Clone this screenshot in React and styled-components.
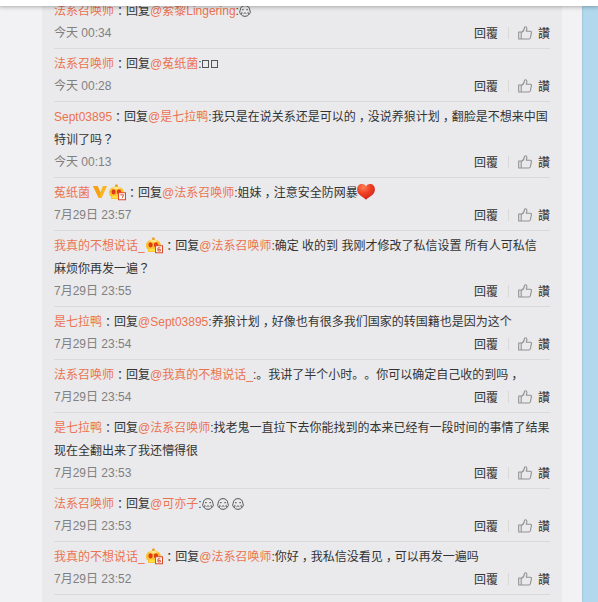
import React from 'react';
import styled, { createGlobalStyle } from 'styled-components';

const GlobalStyle = createGlobalStyle`
  * { box-sizing: border-box; }
  body {
    margin: 0;
    overflow: hidden;
    background: #b1d8ed;
    color: #333;
    font: 12px/23px "Liberation Sans", "Noto Sans CJK SC", sans-serif;
    font-feature-settings: "chws" 0;
    text-spacing-trim: space-all;
  }
`;

const Page = styled.div`
  display: flex;
  flex-direction: column;
  width: 598px;
  height: 602px;
  overflow: hidden;
`;

const TopBar = styled.header`
  position: relative;
  z-index: 1;
  flex: none;
  height: 6px;
  background: #fff;
  box-shadow: 0 0 4px 1px rgba(0, 0, 0, 0.3);
`;

const Column = styled.main`
  display: flex;
  flex: 1;
  min-height: 0;
  width: 582px;
  padding: 0 20px 0 42px;
  background: #f2f2f5;
  box-shadow: 0 0 2px rgba(0, 0, 0, 0.2);
`;

const Comments = styled.section`
  flex: 1;
  margin-top: -10px;
  padding: 0 12px;
  background: #eaeaec;
`;

const Comment = styled.article`
  padding: 4px 0 5px;
  border-bottom: 1px solid #d9d9db;
`;

const Message = styled.div`
  min-height: 23px;
  line-height: 23px;
  white-space: pre;
`;

const MessageLine = styled.div`
  height: 23px;
`;

const Name = styled.a`
  color: #eb7350;
  text-decoration: none;
`;

const Mark = styled.span`
  font-family: "Noto Sans CJK TC", sans-serif;
  line-height: 1;
  vertical-align: ${(p) => p.$shift || 0}px;
`;

const MissingGlyph = styled.span`
  display: inline-block;
  width: 7px;
  height: 8px;
  margin-right: 2px;
  border: 1px solid #555;
`;

const Meta = styled.footer`
  display: flex;
  align-items: center;
  justify-content: space-between;
  height: 20px;
  line-height: 20px;
`;

const Time = styled.time`
  color: #808080;
`;

const Actions = styled.div`
  display: flex;
  align-items: center;
  font-family: "Noto Sans CJK TC", sans-serif;
`;

const Divider = styled.i`
  width: 1px;
  height: 12px;
  margin: 0 9px 0 10px;
  background: #d9d9d9;
`;

const Thumb = styled.svg`
  width: 14px;
  height: 14px;
  margin: -1px 6px 0 0;
`;

const Glyph = styled.svg`
  width: ${(p) => p.$size}px;
  height: ${(p) => p.$size}px;
  margin: ${(p) => p.$margin || '0'};
  vertical-align: ${(p) => p.$drop || -3}px;
`;

const Face = () => (
  <Glyph $size={12} $drop={-2} viewBox="0 0 12 12" fill="none" stroke="#444" strokeWidth=".9">
    <path d="M6 .6A5 5 0 0 0 1.200 5.200C.400 6.500.400 8.600 1.900 9.200A5 5 0 0 0 6 11.400a5 5 0 0 0 4.100-2.200C11.600 8.600 11.600 6.500 10.800 5.200A5 5 0 0 0 6 .6z" />
    <path d="M3 4.700h1.700M7.300 4.700H9M4.600 8.600c.6-.8 2.200-.8 2.800 0M1.900 9.200C3.300 9 3.300 7.300 2.300 6.800M10.100 9.200C8.700 9 8.700 7.300 9.700 6.800" />
  </Glyph>
);

const Vip = () => (
  <Glyph $size={14} $margin="0 2px 0 3px" $drop={-2} viewBox="0 0 14 14">
    <path d="M0 1h4.600L7.300 7.200 10 1h4L8.600 13H5.800z" fill="#fdb51b" />
    <path d="M4.600 1 7.300 7.200 6.400 13H5.800L0 1z" fill="#f5a11a" />
  </Glyph>
);

const Badge = ({ digit, first }) => (
  <Glyph $size={17} $drop={-4} $margin={first ? '0 0 0 1.5px' : '0'} viewBox="0 0 16 16">
    <circle cx="7" cy="1.800" r="1.500" fill="#e8a33b" />
    <path d="M0 8C0 4.300 3 2.500 7 2.500S14 4.300 14 8c0 2-1 3.300-2 4v2H2v-2C1 11.300 0 10 0 8z" fill="#fbc02f" />
    <path d="M3 3.800C5 2.600 9 2.600 11 3.800L9 5H5z" fill="#fde98a" />
    <ellipse cx="4.300" cy="7.400" rx="2" ry="2.500" fill="#e23a18" />
    <ellipse cx="9.400" cy="7.400" rx="2" ry="2.500" fill="#e23a18" />
    <path d="M3 11h6.500v2.500H3z" fill="#ffdf3a" />
    <path d="M9 8.300h6.500v6.500H9z" fill="#fff" stroke="#d94a2c" />
    <path d={digit === 7 ? 'M10.600 10.200h3.200l-1.500 3.300' : 'M13.600 10.200h-2.400v3h2.300v-1.500h-2'} fill="none" stroke="#d94a2c" strokeWidth=".9" />
  </Glyph>
);

const Heart = () => (
  <Glyph $size={18} $drop={-4} $margin="0 0 0 -1px" viewBox="0 0 18 18">
    <defs>
      <radialGradient id="heart" cx=".35" cy=".2" r=".8">
        <stop offset="0" stopColor="#ff8054" />
        <stop offset=".5" stopColor="#ee4025" />
        <stop offset="1" stopColor="#d32318" />
      </radialGradient>
    </defs>
    <path d="M9 3.500C7.500.700 3.500.300 1.500 2.600-.600 5-.200 8.700 2 11.200 4 13.500 7 14.500 9 16.800c2-2.300 5-3.300 7-5.600 2.200-2.500 2.600-6.200.500-8.600C14.500.300 10.500.700 9 3.500z" fill="url(#heart)" />
  </Glyph>
);

const Like = () => (
  <Thumb viewBox="0 0 14 14" fill="none" stroke="#929292" strokeWidth="1.100" strokeLinejoin="round">
    <path d="M.700 6h2.500v7H.700zM3.200 6.500c2-.900 3-2.300 3.100-4.400C6.400.300 8.600.200 8.800 2c.1 1-.1 2.100-.5 3.200h4c1 0 1.300.800 1.100 1.600l-1 4.900c-.2.800-.7 1.300-1.500 1.300H3.200z" />
  </Thumb>
);

const Body = ({ text }) =>
  text.split(/([，？])/).map((part, i) =>
    part === '，' || part === '？' ? (
      <Mark key={i} $shift={part === '，' ? -4 : 0}>{part}</Mark>
    ) : (
      part
    )
  );

const COMMENTS = [
  { from: '法系召唤师', to: '萦黎Lingering', lines: [<Face key="f" />], time: '今天 00:34' },
  {
    from: '法系召唤师',
    to: '菟纸菌',
    lines: [<React.Fragment key="m"><MissingGlyph /><MissingGlyph /></React.Fragment>],
    time: '今天 00:28',
  },
  {
    from: 'Sept03895',
    to: '是七拉鸭',
    lines: ['我只是在说关系还是可以的，没说养狼计划，翻脸是不想来中国', '特训了吗？'],
    time: '今天 00:13',
  },
  {
    from: '菟纸菌',
    icons: <><Vip /><Badge digit={7} /></>,
    to: '法系召唤师',
    lines: ['姐妹，注意安全防网暴'],
    tail: <Heart />,
    time: '7月29日 23:57',
  },
  {
    from: '我真的不想说话_',
    icons: <Badge digit={6} first />,
    to: '法系召唤师',
    lines: ['确定 收的到 我刚才修改了私信设置 所有人可私信', '麻烦你再发一遍？'],
    time: '7月29日 23:55',
  },
  {
    from: '是七拉鸭',
    to: 'Sept03895',
    lines: ['养狼计划，好像也有很多我们国家的转国籍也是因为这个'],
    time: '7月29日 23:54',
  },
  {
    from: '法系召唤师',
    to: '我真的不想说话_',
    lines: ['。我讲了半个小时。。你可以确定自己收的到吗，'],
    time: '7月29日 23:54',
  },
  {
    from: '是七拉鸭',
    to: '法系召唤师',
    lines: ['找老鬼一直拉下去你能找到的本来已经有一段时间的事情了结果', '现在全翻出来了我还懵得很'],
    time: '7月29日 23:53',
  },
  {
    from: '法系召唤师',
    to: '可亦子',
    lines: [<React.Fragment key="f"><Face /> <Face /> <Face /></React.Fragment>],
    time: '7月29日 23:53',
  },
  {
    from: '我真的不想说话_',
    icons: <Badge digit={6} first />,
    to: '法系召唤师',
    lines: ['你好，我私信没看见，可以再发一遍吗'],
    time: '7月29日 23:52',
  },
];

const renderLine = (line) => (typeof line === 'string' ? <Body text={line} /> : line);

const CommentItem = ({ from, icons, to, lines, tail, time }) => (
  <Comment>
    <Message>
      <MessageLine>
        <Name>{from}</Name>
        {icons}
        <Mark $shift={-1}>：</Mark>回复<Name>@{to}</Name>:{renderLine(lines[0])}
        {tail}
      </MessageLine>
      {lines.slice(1).map((line, i) => (
        <MessageLine key={i}>{renderLine(line)}</MessageLine>
      ))}
    </Message>
    <Meta>
      <Time>{time}</Time>
      <Actions>
        <span>回覆</span>
        <Divider />
        <Like />
        <span>讚</span>
      </Actions>
    </Meta>
  </Comment>
);

export default function App() {
  return (
    <Page>
      <GlobalStyle />
      <TopBar />
      <Column>
        <Comments>
          {COMMENTS.map((c, i) => (
            <CommentItem key={i} {...c} />
          ))}
        </Comments>
      </Column>
    </Page>
  );
}
